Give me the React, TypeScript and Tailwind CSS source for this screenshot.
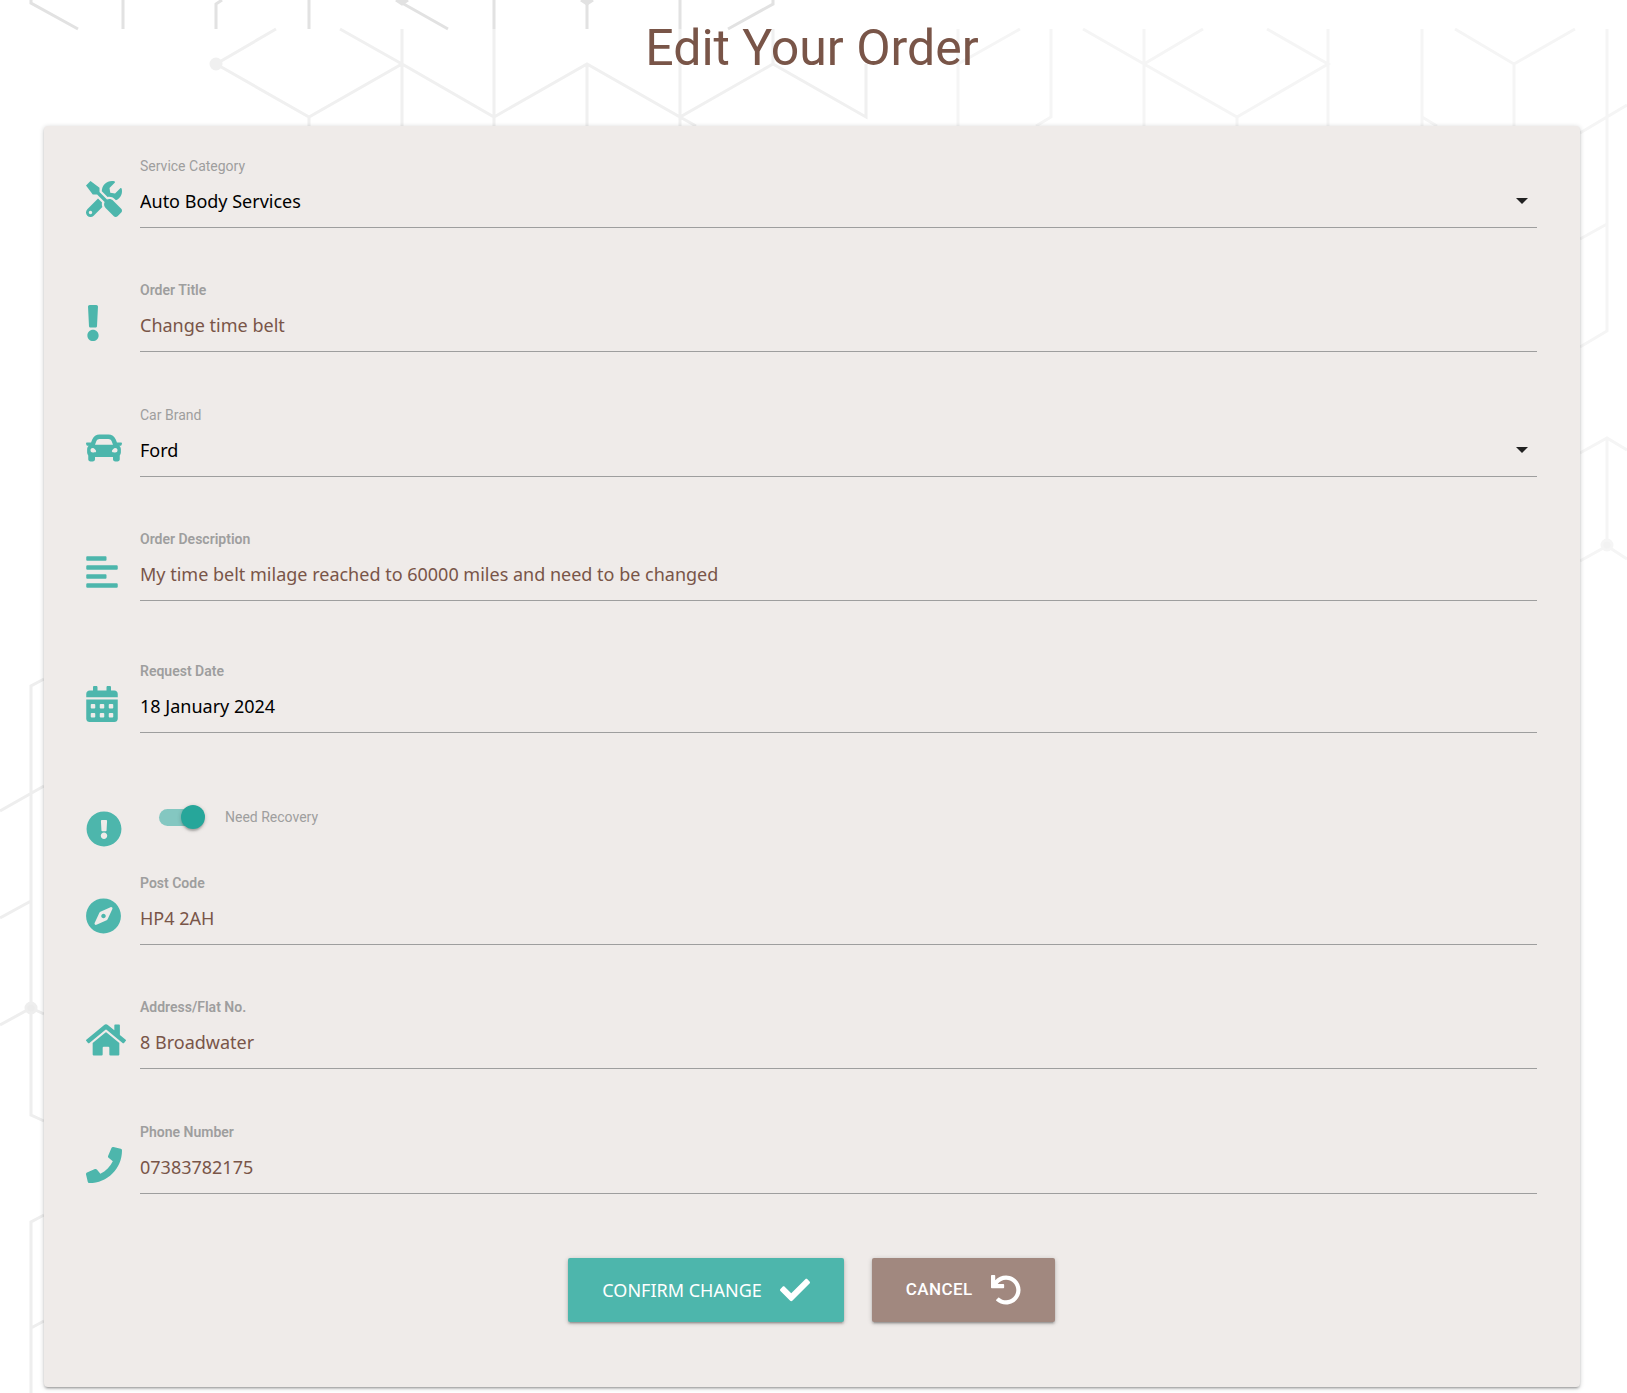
import { useId, useState, type ReactNode } from "react";
import type { IconType } from "react-icons";
import {
  FaAlignLeft,
  FaCalendarAlt,
  FaCar,
  FaCheck,
  FaCompass,
  FaExclamation,
  FaExclamationCircle,
  FaHome,
  FaPhone,
  FaTools,
  FaUndo,
} from "react-icons/fa";

const labelText = "font-['Roboto',sans-serif] text-sm leading-5 text-[#9e9e9e]";
const valueText =
  "h-12 w-full appearance-none rounded-none border-b border-[#9e9e9e] bg-transparent pb-1.5 font-['Noto_Sans',sans-serif] text-lg font-normal outline-none";

function Backdrop() {
  return (
    <svg
      aria-hidden="true"
      className="pointer-events-none absolute inset-0 h-full w-full"
      viewBox="0 0 1627 1393"
      preserveAspectRatio="xMidYMin slice"
      fill="none"
    >
      <g stroke="#e2e2e2" strokeWidth="3">
        <path d="M31 0V3L78 29M123 0V29M222 0L216 4V29M309 0V29M402 3L448 29M494 0V29M587 0V29M680 0V29M773 0V4L728 29" />
        <path d="M396 0L402 4L408 0M581 0L587 4L593 0" fill="#e2e2e2" />
      </g>
      <g stroke="#f0f0f0" strokeWidth="3">
        <path d="M276 29L216 64L309 117L402 64L494 117L587 64L680 117L773 64L866 117V64M340 29L402 64M309 117V126M402 29V126M494 29V126M587 64V126M680 29V126M680 117L696 126M773 29V64" />
        <circle cx="216" cy="64" r="5" fill="#f0f0f0" />
      </g>
      <g stroke="#f5f5f5" strokeWidth="3">
        <path d="M958 29V126M1020 29L958 64M1051 29V117L1036 126M1083 29L1144 64L1237 117L1328 64L1267 29M1144 29V126M1144 64L1203 29M1237 117V126M1328 29V126M1422 29V126M1422 117L1437 126M1514 126V64L1455 29M1514 64L1575 29" />
        <path d="M1607 29V331L1580 347M1580 133L1627 105M1580 239L1607 224M1580 453L1607 438L1627 450M1607 438V545M1580 561L1607 546L1627 559" />
        <circle cx="1607" cy="545" r="5" fill="#f2f2f2" />
      </g>
      <g stroke="#eeeeee" strokeWidth="3">
        <path d="M44 679L31 686V1115L44 1121M0 811L44 786M0 918L31 901M0 1025L31 1008L44 1014M44 1215L31 1222V1393M31 1328L44 1321" />
        <circle cx="31" cy="1008" r="5" fill="#ebebeb" />
      </g>
    </svg>
  );
}

function Row({
  icon: Icon,
  iconSize = "h-9 w-9",
  label,
  id,
  bold,
  className,
  children,
}: {
  icon: IconType;
  iconSize?: string;
  label: string;
  id: string;
  bold?: boolean;
  className: string;
  children: ReactNode;
}) {
  return (
    <div className={`flex ${className}`}>
      <div className="w-[54px] shrink-0 pt-[25px] text-[#4db6ac]">
        <Icon className={iconSize} aria-hidden="true" />
      </div>
      <div className="flex min-w-0 grow flex-col gap-1">
        <label htmlFor={id} className={`${labelText} ${bold ? "font-semibold" : "font-normal"}`}>
          {label}
        </label>
        {children}
      </div>
    </div>
  );
}

function TextRow({
  icon,
  iconSize,
  label,
  value,
  dark,
  className,
}: {
  icon: IconType;
  iconSize?: string;
  label: string;
  value: string;
  dark?: boolean;
  className: string;
}) {
  const id = useId();
  return (
    <Row icon={icon} iconSize={iconSize} label={label} id={id} bold className={className}>
      <input
        id={id}
        type="text"
        defaultValue={value}
        className={`${valueText} ${dark ? "text-black" : "text-[#795548]"}`}
      />
    </Row>
  );
}

function SelectRow({
  icon,
  label,
  options,
  className,
}: {
  icon: IconType;
  label: string;
  options: string[];
  className: string;
}) {
  const id = useId();
  return (
    <Row icon={icon} label={label} id={id} className={className}>
      <div className="relative">
        <select id={id} className={`${valueText} text-black`}>
          {options.map((o) => (
            <option key={o}>{o}</option>
          ))}
        </select>
        <svg
          aria-hidden="true"
          viewBox="0 0 12 6"
          className="pointer-events-none absolute top-[18px] right-[9px] h-1.5 w-3"
        >
          <path d="M0 0H12L6 6Z" fill="#212121" />
        </svg>
      </div>
    </Row>
  );
}

export default function App() {
  const [recovery, setRecovery] = useState(true);
  return (
    <main className="relative overflow-hidden bg-white pr-[47px] pb-1.5 pl-11">
      <Backdrop />
      <h1 className="relative h-[126px] pt-4 text-center font-['Roboto',sans-serif] text-[50px] leading-[64px] text-[#795548]">
        Edit Your Order
      </h1>
      <form
        onSubmit={(e) => e.preventDefault()}
        className="relative rounded-sm bg-[#efebe9] pt-[30px] pr-[43px] pb-[65px] pl-[42px] shadow-[0_2px_2px_0_rgba(0,0,0,0.14),0_3px_1px_-2px_rgba(0,0,0,0.12),0_1px_5px_0_rgba(0,0,0,0.2)]"
      >
        <SelectRow
          icon={FaTools}
          label="Service Category"
          options={["Auto Body Services"]}
          className="mb-[52px]"
        />
        <TextRow
          icon={FaExclamation}
          iconSize="h-9 w-3.5"
          label="Order Title"
          value="Change time belt"
          className="mb-[53px]"
        />
        <SelectRow icon={FaCar} label="Car Brand" options={["Ford"]} className="mb-[52px]" />
        <TextRow
          icon={FaAlignLeft}
          iconSize="h-9 w-8"
          label="Order Description"
          value="My time belt milage reached to 60000 miles and need to be changed"
          className="mb-[60px]"
        />
        <TextRow
          icon={FaCalendarAlt}
          iconSize="h-9 w-8"
          label="Request Date"
          value="18 January 2024"
          dark
          className="mb-[60px]"
        />

        <div className="flex h-20">
          <div className="w-[54px] shrink-0 pt-[18px] text-[#4db6ac]">
            <FaExclamationCircle className="h-9 w-9" aria-hidden="true" />
          </div>
          <label className="ml-[19px] flex h-12 cursor-pointer items-center">
            <input
              type="checkbox"
              role="switch"
              checked={recovery}
              onChange={(e) => setRecovery(e.target.checked)}
              className="peer sr-only"
            />
            <span className="flex h-[17px] w-[46px] items-center rounded-full bg-gradient-to-r from-[#84c7c1] from-80% to-transparent to-80% peer-checked:justify-end">
              <span className="size-6 shrink-0 rounded-full bg-[#26a69a] shadow-[0_3px_2px_-1px_rgba(0,0,0,0.2),0_1px_4px_0_rgba(0,0,0,0.2)]" />
            </span>
            <span className={`${labelText} ml-5`}>Need Recovery</span>
          </label>
        </div>

        <TextRow
          icon={FaCompass}
          iconSize="h-9 w-[35px]"
          label="Post Code"
          value="HP4 2AH"
          className="mb-[52px]"
        />
        <TextRow
          icon={FaHome}
          iconSize="h-9 w-10"
          label="Address/Flat No."
          value="8 Broadwater"
          className="mb-[53px]"
        />
        <TextRow icon={FaPhone} label="Phone Number" value="07383782175" className="mb-16" />

        <div className="flex justify-center gap-7">
          <button
            type="submit"
            className="flex h-16 items-center gap-[18px] rounded-xs bg-[#4db6ac] px-[34px] font-['Noto_Sans',sans-serif] text-lg text-white shadow-[0_2px_2px_0_rgba(0,0,0,0.14),0_3px_1px_-2px_rgba(0,0,0,0.12),0_1px_5px_0_rgba(0,0,0,0.2)]"
          >
            CONFIRM CHANGE
            <FaCheck className="size-[30px]" aria-hidden="true" />
          </button>
          <button
            type="button"
            className="flex h-16 items-center gap-[18px] rounded-xs bg-[#a1887f] px-[34px] font-['Roboto',sans-serif] text-[17px] font-medium tracking-wide text-white shadow-[0_2px_2px_0_rgba(0,0,0,0.14),0_3px_1px_-2px_rgba(0,0,0,0.12),0_1px_5px_0_rgba(0,0,0,0.2)]"
          >
            CANCEL
            <FaUndo className="size-[30px]" aria-hidden="true" />
          </button>
        </div>
      </form>
    </main>
  );
}
